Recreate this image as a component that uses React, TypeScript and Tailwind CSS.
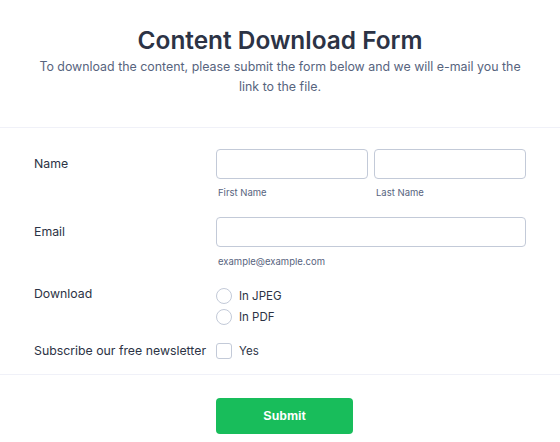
import React from "react";

const font = { fontFamily: "Inter, 'Noto Sans', sans-serif" };

function Label({ children }: { children: React.ReactNode }) {
  return (
    <div className="w-[182px] shrink-0 text-[12.3px] leading-[16px] text-[#2c3345]">{children}</div>
  );
}

export default function App() {
  return (
    <div className="w-[560px] h-[442px] bg-white overflow-hidden" style={font}>
      <div className="pt-6 text-center">
        <h1 className="text-[24.4px] leading-[32px] font-semibold text-[#2c3345]">Content Download Form</h1>
        <p className="mt-px px-[36px] text-[12.4px] leading-[20px] text-[#57647e]">
          To download the content, please submit the form below and we will e-mail you the link to the file.
        </p>
      </div>
      <div className="mt-[30px] border-t border-[#f0f1f8] pl-[34px]">
        <div className="mt-[21px] flex">
          <div className="flex h-[30px] items-center">
            <Label>Name</Label>
          </div>
          <div className="flex w-[310px] gap-[6px]">
            <div className="flex-1">
              <div className="h-[30px] rounded-[4px] border border-[#c3cad8]" />
              <div className="mt-[8px] pl-[2px] text-[9.5px] leading-[12px] text-[#57647e]">First Name</div>
            </div>
            <div className="flex-1">
              <div className="h-[30px] rounded-[4px] border border-[#c3cad8]" />
              <div className="mt-[8px] pl-[2px] text-[9.5px] leading-[12px] text-[#57647e]">Last Name</div>
            </div>
          </div>
        </div>
        <div className="mt-[18px] flex">
          <div className="flex h-[30px] items-center">
            <Label>Email</Label>
          </div>
          <div className="w-[310px]">
            <div className="h-[30px] rounded-[4px] border border-[#c3cad8]" />
            <div className="mt-[9px] pl-[2px] text-[9.5px] leading-[12px] text-[#57647e]">example@example.com</div>
          </div>
        </div>
        <div className="mt-[20px] flex">
          <div className="-mt-[2px]">
            <Label>Download</Label>
          </div>
          <div className="flex flex-col gap-[5px]">
            {["In JPEG", "In PDF"].map((t) => (
              <div key={t} className="flex h-[16px] items-center gap-[7px]">
                <div className="h-[16px] w-[16px] rounded-full border border-[#c3cad8]" />
                <span className="text-[11.5px] leading-[16px] text-[#2c3345]">{t}</span>
              </div>
            ))}
          </div>
        </div>
        <div className="mt-[18px] flex items-center">
          <Label>Subscribe our free newsletter</Label>
          <div className="flex h-[16px] items-center gap-[7px]">
            <div className="h-[16px] w-[16px] rounded-[3px] border border-[#c3cad8]" />
            <span className="text-[11.5px] leading-[16px] text-[#2c3345]">Yes</span>
          </div>
        </div>
      </div>
      <div className="mt-[15px] border-t border-[#f0f1f8] pt-[23px] pl-[216px]">
        <button
          className="h-[36px] w-[137px] rounded-[4px] bg-[#18bd5b] text-[12.5px] font-bold text-white"
          style={{ fontFamily: "'Liberation Sans', Arial, sans-serif" }}
        >
          Submit
        </button>
      </div>
    </div>
  );
}
